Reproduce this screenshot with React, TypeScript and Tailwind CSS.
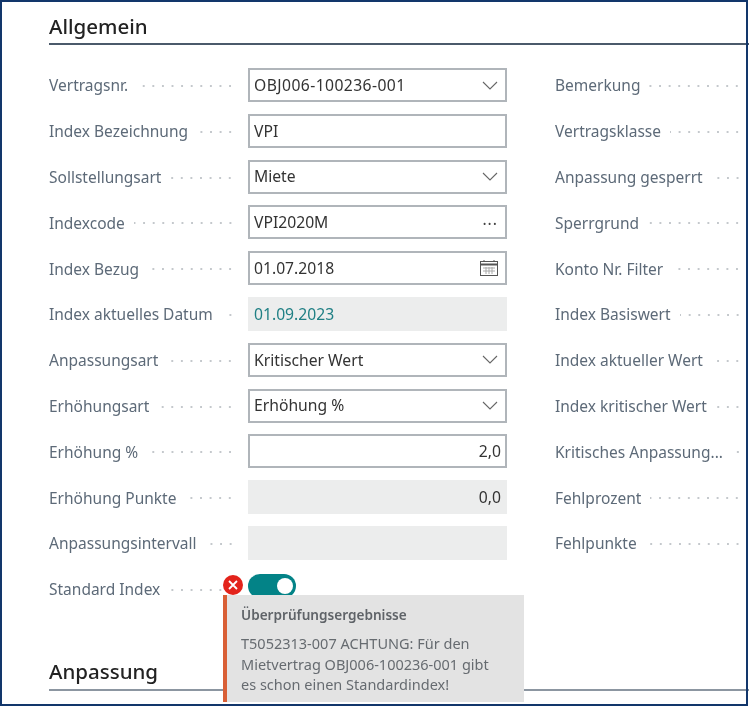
import React from "react";

const font = "font-['Noto_Sans','Open_Sans',sans-serif]";

type Field = {
  label: string;
  value?: string;
  kind: "select" | "text" | "lookup" | "date" | "readonly" | "toggle";
  right?: boolean;
  link?: boolean;
  wide?: boolean;
};

const leftFields: Field[] = [
  { label: "Vertragsnr.", value: "OBJ006-100236-001", kind: "select", wide: true },
  { label: "Index Bezeichnung", value: "VPI", kind: "text" },
  { label: "Sollstellungsart", value: "Miete", kind: "select" },
  { label: "Indexcode", value: "VPI2020M", kind: "lookup" },
  { label: "Index Bezug", value: "01.07.2018", kind: "date" },
  { label: "Index aktuelles Datum", value: "01.09.2023", kind: "readonly", link: true },
  { label: "Anpassungsart", value: "Kritischer Wert", kind: "select" },
  { label: "Erhöhungsart", value: "Erhöhung %", kind: "select" },
  { label: "Erhöhung %", value: "2,0", kind: "text", right: true },
  { label: "Erhöhung Punkte", value: "0,0", kind: "readonly", right: true },
  { label: "Anpassungsintervall", kind: "readonly" },
  { label: "Standard Index", kind: "toggle" },
];

const rightLabels = [
  "Bemerkung",
  "Vertragsklasse",
  "Anpassung gesperrt",
  "Sperrgrund",
  "Konto Nr. Filter",
  "Index Basiswert",
  "Index aktueller Wert",
  "Index kritischer Wert",
  "Kritisches Anpassung...",
  "Fehlprozent",
  "Fehlpunkte",
];

const Label: React.FC<{ text: string }> = ({ text }) => (
  <div className="flex items-center min-w-0 flex-1 gap-[9px] pt-[2px]">
    <span className="whitespace-nowrap text-[15.5px] text-[#5d6a78]">{text}</span>
    <span className="flex-1 h-[4px] bg-[radial-gradient(circle,#c4c8cc_1px,transparent_1.3px)] bg-[length:9.6px_4px] bg-repeat-x bg-right" />
  </div>
);

const CalendarIcon = () => (
  <svg width="20" height="18" viewBox="0 0 20 18" fill="none" stroke="#555" strokeWidth="1" className="mr-[2px]">
    <rect x="1.5" y="2.5" width="17" height="14" />
    <path d="M1.5 5.5h17" strokeWidth="2" />
    <path d="M5 1v2M15 1v2" />
    <path d="M4 9h12M4 12h12M7 8v7M10 8v7M13 8v7" stroke="#aaa" />
  </svg>
);

const Chevron = () => (
  <svg width="16" height="9" viewBox="0 0 16 9" fill="none" stroke="#666" strokeWidth="1.1">
    <path d="M1 1l7 7 7-7" />
  </svg>
);

const Control: React.FC<{ field: Field }> = ({ field }) => {
  if (field.kind === "toggle") {
    return (
      <div className="h-full flex items-center">
        <div className="w-[48px] h-[24px] rounded-full bg-[#038387] flex items-center justify-end pr-[3px] mt-[-6px]">
          <div className="w-[16px] h-[16px] rounded-full bg-white" />
        </div>
      </div>
    );
  }
  const readonly = field.kind === "readonly";
  return (
    <div
      className={`h-full flex items-center text-[15.7px] text-[#333333] ${
        readonly ? "bg-[#eceded] px-[6px]" : "bg-white border-2 border-[#b0b5ba] px-[4px]"
      } ${field.right ? "justify-end" : "justify-between"}`}
    >
      <span className={`pt-[1px] ${field.link ? "text-[#1f7f84]" : ""} ${field.wide ? "tracking-[0.42px]" : ""}`}>
        {field.value}
      </span>
      {field.kind === "select" && (
        <span className="mr-[3px]">
          <Chevron />
        </span>
      )}
      {field.kind === "lookup" && <span className="mr-[3px] mb-[6px] tracking-[1px] text-[#444]">...</span>}
      {field.kind === "date" && <CalendarIcon />}
    </div>
  );
};

export default function App() {
  return (
    <div className={`${font} relative w-[749px] h-[707px] overflow-hidden bg-white blur-[0.35px]`}>
      <div className="absolute inset-0 mr-[1px] mb-[1px] border-2 border-[#12366b] pointer-events-none z-10" />
      <div className="pl-[49px] pt-[13px]">
        <h2 className="text-[20.5px] leading-[26px] font-medium text-[#222222]">Allgemein</h2>
        <div className="mt-[4px] h-[2px] bg-[#4b5a6b]" />
        <div className="flex mt-[23px]">
          <div className="w-[458px] flex flex-col gap-[11.8px]">
            {leftFields.map((f) => (
              <div key={f.label} className="flex items-center h-[34px]">
                <div className="w-[186px] flex">
                  <Label text={f.label} />
                </div>
                <div className="ml-[13px] w-[259px] h-full">
                  <Control field={f} />
                </div>
              </div>
            ))}
          </div>
          <div className="ml-[48px] w-[187px] flex flex-col gap-[11.8px]">
            {rightLabels.map((l) => (
              <div key={l} className="flex items-center h-[34px]">
                <Label text={l} />
              </div>
            ))}
          </div>
        </div>
        <h2 className="mt-[52px] text-[20.5px] leading-[26px] font-medium text-[#222222]">Anpassung</h2>
        <div className="mt-[5px] h-[2px] bg-[#8c96a1]" />
      </div>

      {/* validation popup over the toggle */}
      <div className="absolute left-[220px] top-[574px] z-[5] w-[25px] h-[22px] flex items-center justify-center">
        <div className="w-[20px] h-[20px] rounded-full bg-[#e3231b] flex items-center justify-center">
          <svg width="10" height="10" viewBox="0 0 10 10" stroke="white" strokeWidth="1.8">
            <path d="M1 1l8 8M9 1l-8 8" />
          </svg>
        </div>
      </div>
      <div className="absolute left-[223px] top-[595px] w-[301px] h-[107px] z-[4] bg-[#e3e3e3] border-l-[4px] border-[#d95f36] pl-[14px] pr-2 pt-[9px]">
        <div className="text-[13.6px] leading-[22px] font-semibold text-[#5f6368]">Überprüfungsergebnisse</div>
        <div className="mt-[7px] text-[14.5px] leading-[20.5px] text-[#666b70] whitespace-nowrap">
          T5052313-007 ACHTUNG: Für den
          <br />
          Mietvertrag OBJ006-100236-001 gibt
          <br />
          es schon einen Standardindex!
        </div>
      </div>
    </div>
  );
}
